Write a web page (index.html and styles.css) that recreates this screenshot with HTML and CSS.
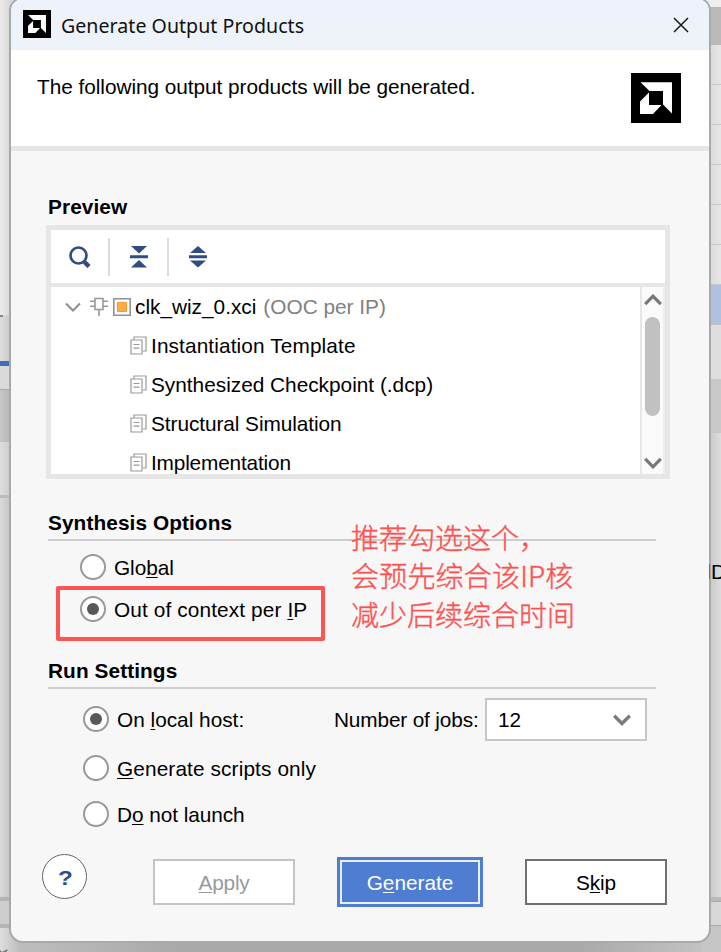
FILE: index.html
```html
<!DOCTYPE html>
<html lang="en">
<head>
<meta charset="utf-8">
<title>Generate Output Products</title>
<link rel="stylesheet" href="styles.css">
</head>
<body>
<div class="desktop">
  <div class="strip strip-left">
    <i class="l-top"></i><i class="l-dash"></i><i class="l-gap"></i><i class="l-blue"></i><i class="l-panel"></i><i class="l-dark"></i><i class="l-panel2"></i><i class="l-rule"></i><i class="l-main"></i><i class="l-foot"></i>
    <svg class="l-check" width="11" height="27" viewBox="0 0 11 27"><path d="M0 22L2 24L6.500 21.500L8 22L3 27H0" fill="#777"/></svg>
  </div>
  <main class="dialog">
    <header class="titlebar">
      <svg class="app-icon" width="28" height="28" viewBox="0 0 50 50"><path d="M0 0h50v50H0z"/><path fill="#fff" d="M9 9h32v32L32 32V18H18zM18 19.500V32h12.500L22 41H9V28z"/></svg>
      <span class="title">Generate Output Products</span>
      <svg class="close" width="16" height="16" viewBox="0 0 16 16"><path d="M1 1L15 15M15 1L1 15" stroke="#15181d" stroke-width="1.500" fill="none"/></svg>
    </header>
    <section class="banner">
      <p class="banner-text">The following output products will be generated.</p>
      <svg width="50" height="50" viewBox="0 0 50 50"><path d="M0 0h50v50H0z"/><path fill="#fff" d="M9.500 9.200H41V40.500L32 31.500V18H18.500zM18 19.500V32h12.500L22 41H9V28.500z"/></svg>
    </section>
    <div class="content">
      <h2 class="preview-title">Preview</h2>
      <section class="preview">
        <div class="toolbar">
          <svg class="tool-search" width="22" height="22" viewBox="0 0 22 22" fill="none" stroke="#2f4c85"><circle cx="9.500" cy="9.500" r="8" stroke-width="2.700"/><path d="M15.500 16L20 20.500" stroke-width="4.500"/></svg>
          <i class="sep"></i>
          <svg class="tool-icon" width="18" height="22" viewBox="0 0 18 22" fill="#2f4c85"><path d="M1 0h16L9 7.500zM0 9.300h18v3H0zM1 21.500h16L9 14z"/></svg>
          <i class="sep"></i>
          <svg class="tool-icon" width="18" height="22" viewBox="0 0 18 22" fill="#2f4c85"><path d="M1 7L9 0l8 7zM0 9.300h18v3H0zM1 14.500h16L9 21.500z"/></svg>
        </div>
        <div class="tree-wrap">
          <div class="tree">
            <div class="row root">
              <svg width="16" height="10" viewBox="0 0 16 10"><path d="M1 1.500L8 8.500L15 1.500" fill="none" stroke="#8e8e8e" stroke-width="2"/></svg>
              <svg class="chip" width="18" height="19" viewBox="0 0 18 19" fill="none" stroke="#999" stroke-width="1.600"><path d="M5 1.500h8v11H5zM0 4.300h5M0 9.300h5M13 4.300h5M13 9.300h5M9 12.500V19"/></svg>
              <svg class="source" width="18" height="18" viewBox="0 0 18 18"><path d="M.8.800h16.400v16.400H.8z" fill="#fff" stroke="#929294" stroke-width="1.600"/><path d="M4.500 4.500h9v9h-9z" fill="#ffad42" stroke="#f79832"/></svg>
              <span class="file">clk_wiz_0.xci</span><span class="muted">(OOC per IP)</span>
            </div>
            <div class="row leaf"><svg width="17" height="19" viewBox="0 0 17 19"><path d="M4 3.500V1h12v14h-3M1 4h11v14H1zM3.500 8.500h6M3.500 12.200h6" fill="none" stroke="#999" stroke-width="1.200"/></svg><span class="wide">Instantiation Template</span></div>
            <div class="row leaf"><svg width="17" height="19" viewBox="0 0 17 19"><path d="M4 3.500V1h12v14h-3M1 4h11v14H1zM3.500 8.500h6M3.500 12.200h6" fill="none" stroke="#999" stroke-width="1.200"/></svg><span>Synthesized Checkpoint (.dcp)</span></div>
            <div class="row leaf"><svg width="17" height="19" viewBox="0 0 17 19"><path d="M4 3.500V1h12v14h-3M1 4h11v14H1zM3.500 8.500h6M3.500 12.200h6" fill="none" stroke="#999" stroke-width="1.200"/></svg><span class="snug">Structural Simulation</span></div>
            <div class="row leaf"><svg width="17" height="19" viewBox="0 0 17 19"><path d="M4 3.500V1h12v14h-3M1 4h11v14H1zM3.500 8.500h6M3.500 12.200h6" fill="none" stroke="#999" stroke-width="1.200"/></svg><span class="tight">Implementation</span></div>
          </div>
          <div class="scrollbar">
            <svg width="18" height="12" viewBox="0 0 18 12"><path d="M1.200 10.200L9 2.200L16.800 10.200" fill="none" stroke="#777" stroke-width="3.200"/></svg>
            <i class="thumb"></i>
            <svg class="down" width="18" height="12" viewBox="0 0 18 12"><path d="M1.200 1.800L9 9.800L16.800 1.800" fill="none" stroke="#777" stroke-width="3.200"/></svg>
          </div>
        </div>
      </section>

      <h2 class="group-title">Synthesis Options</h2>
      <div class="synth">
        <label class="option global"><i class="radio"></i><span class="snug">Glo<u>b</u>al</span></label>
        <label class="option"><i class="radio on"></i><span class="wide">Out of context per <u>I</u>P</span></label>
      </div>

      <h2 class="group-title run-title">Run Settings</h2>
      <div class="run">
        <div class="local">
          <label class="option"><i class="radio on"></i><span>On <u>l</u>ocal host:</span></label>
          <span class="jobs">Number of jobs:</span>
          <div class="select"><span>12</span><svg width="18" height="12" viewBox="0 0 18 12"><path d="M1.200 1.800L9 9.500L16.800 1.800" fill="none" stroke="#7b7b7b" stroke-width="3.400"/></svg></div>
        </div>
        <label class="option scripts"><i class="radio"></i><span class="wide"><u>G</u>enerate scripts only</span></label>
        <label class="option launch"><i class="radio"></i><span class="snug">D<u>o</u> not launch</span></label>
      </div>

      <footer class="actions">
        <div class="help"><span>?</span></div>
        <div class="button apply"><span><u>A</u>pply</span></div>
        <div class="button generate"><span>G<u>e</u>nerate</span></div>
        <div class="button skip"><span>S<u>k</u>ip</span></div>
      </footer>
    </div>
  </main>
  <div class="strip strip-right">
    <i class="r-top"></i><i class="r-bar"></i><i class="r-row"></i><i class="r-row"></i><i class="r-row"></i><i class="r-row"></i><i class="r-row"></i><i class="r-row"></i><i class="r-sel"></i><i class="r-gap"></i><i class="r-dark"></i><div class="r-main"><span class="letter">D</span></div><i class="r-line"></i><i class="r-foot"></i>
  </div>
  <div class="edge-letter"></div>
  <div class="highlight"></div>
  <div class="note"><div>推荐勾选这个，</div><div class="note-mid">会预先综合该IP核</div><div>减少后续综合时间</div></div>
</div>
</body>
</html>
```
FILE: styles.css
```css
* { box-sizing: border-box; }
body { margin: 0; }
.desktop {
  position: relative;
  display: flex;
  width: 721px;
  height: 952px;
  overflow: hidden;
  background: linear-gradient(90deg, #c0c0c0, #a9a9a9 25%, #a9a9a9 80%, #c6c6c6);
  font-family: "Liberation Sans", Arial, sans-serif;
  font-size: 20.8px;
  color: #000;
}
i { display: block; flex: none; font-style: normal; }
svg { display: block; flex: none; }
p, h2 { margin: 0; }
u { text-decoration-thickness: 1px; text-underline-offset: 2px; text-decoration-skip-ink: none; }

.strip { display: flex; flex-direction: column; flex: none; height: 952px; }
.strip-left { width: 18px; margin-right: -9px; background: linear-gradient(90deg, #dedede, #c0c0c0); }
.l-top { height: 315px; background: linear-gradient(90deg, #ececec, #dadada 9px); }
.l-dash { width: 3px; height: 2px; background: #888; }
.l-gap { height: 44px; background: linear-gradient(90deg, #dedede, #cbcbcb 9px); }
.l-blue { height: 5px; background: #426cb8; }
.l-panel { height: 23px; background: #dadada; }
.l-dark { height: 53px; background: linear-gradient(90deg, #c8c8c8, #b8b8b8 9px); border-top: 1px solid #aaa; }
.l-panel2 { height: 53px; background: linear-gradient(90deg, #dedede, #cfcfcf 9px); }
.l-rule { height: 3px; background: #bcbcbc; }
.l-main { height: 399px; background: linear-gradient(90deg, #dadada, #c8c8c8 9px); }
.l-foot { height: 31px; background: #cecece; border: solid #b4b4b4; border-width: 4px 0; }

.strip-right { z-index: 0; width: 20px; margin-left: -10px; background: #c6c6c6; }
.r-top { height: 7px; background: #eee; }
.r-bar { height: 38px; background: #b9b9b9; }
.r-row { height: 40px; background: linear-gradient(90deg, #dcdcdc 10px, #e6e6e6); border-bottom: 1px solid #c6c6c6; }
.r-sel { height: 40px; background: #b0c1df; border-bottom: 1px solid #c0c0c0; }
.r-gap { height: 54px; background: #dedede; }
.r-dark { height: 54px; background: #c8c8c8; }
.r-main { height: 464px; padding: 127px 0 0 10px; background: linear-gradient(90deg, #cbcbcb 10px, #dcdcdc); overflow: hidden; }
.letter { display: block; line-height: 24px; }
.r-line { height: 4px; background: #bababa; }
.r-foot { height: 25px; background: #d8d8d8; border: solid #aaa; border-width: 1px 0; }
.edge-letter { position: absolute; z-index: 2; left: 709px; top: 564px; width: 1px; height: 15px; background: #55789f; }

.dialog {
  position: relative;
  z-index: 1;
  flex: none;
  width: 702px;
  height: 946px;
  margin-top: -3px;
  border: 2px solid #a9a9a9;
  border-radius: 14px;
  background: #f7f7f7;
  overflow: hidden;
}
.titlebar {
  display: flex;
  align-items: center;
  height: 51px;
  padding: 0 20px 2px 12px;
  background: linear-gradient(180deg, #eef2fb, #edf3f8);
}
.title { flex: 1; margin: 4px 0 0 10px; font-family: "Noto Sans", "Open Sans", sans-serif; font-size: 19.6px; letter-spacing: .02px; white-space: nowrap; color: #111; }
.close { margin-top: 2px; }
.banner { display: flex; align-items: flex-start; justify-content: space-between; height: 101px; padding: 23px 28px 0 26px; background: #fff; border-bottom: 5px solid #e6e6e6; }
.banner-text { margin-top: 2px; line-height: 24px; letter-spacing: -.04px; }

.content { padding: 44px 39px 0 35px; }
h2 { font-size: 20.8px; line-height: 24px; font-weight: 700; letter-spacing: .09px; }
.preview-title { margin-left: 2px; }
.preview { width: 624px; height: 254px; margin-top: 6px; border: 5px solid #e6e6e6; background: #fff; }
.toolbar { display: flex; align-items: center; height: 57px; padding-left: 18px; border-bottom: 4px solid #e6e6e6; }
.sep { width: 2px; height: 38px; background: #dadada; }
.tool-search { margin-right: 17px; }
.tool-icon { margin: 0 19.500px; }
.tree-wrap { display: flex; height: 187px; }
.tree { flex: 1; overflow: hidden; }
.row { display: flex; align-items: center; height: 39px; white-space: nowrap; }
.root { padding-left: 14px; }
.chip { margin-left: 9px; }
.source { margin-left: 5px; }
.file { margin-left: 4px; }
.muted { margin-left: 7px; color: #808080; }
.leaf { padding-left: 79px; }
.leaf svg { margin-right: 4px; }
.leaf span, .file, .muted { line-height: 24px; }
.wide { letter-spacing: .12px; }
.snug { letter-spacing: -.06px; }
.tight { letter-spacing: -.17px; }
.scrollbar { display: flex; flex-direction: column; align-items: flex-start; width: 25px; padding: 7px 0 5px 2px; border-left: 2px solid #e6e6e6; border-right: 2px solid #eee; background: #fafafa; }
.thumb { width: 15px; height: 99px; margin: 11px 0 0 1px; border-radius: 8px; background: #c1c1c1; }
.scrollbar .down { margin-top: auto; }

.group-title { width: 608px; height: 30px; margin: 32px 0 0 2px; border-bottom: 2px solid #cdcdcd; }
.synth { padding: 13px 0 0 34px; }
.option { display: flex; align-items: center; height: 26px; gap: 8px; line-height: 24px; white-space: nowrap; }
.radio { display: flex; align-items: center; justify-content: center; width: 26px; height: 26px; border: 2px solid #999; border-radius: 50%; background: #fff; }
.on::before { content: ""; width: 12px; height: 12px; border-radius: 50%; background: #555958; }
.option span { margin-top: 2px; }
.global { margin-bottom: 16px; }
.run-title { margin-top: 37px; }
.run { padding: 9px 0 0 37px; }
.local { display: flex; align-items: center; height: 43px; }
.local .option { width: 251px; margin-top: -1px; }
.jobs { width: 151px; letter-spacing: -.15px; white-space: nowrap; }
.select { display: flex; align-items: center; justify-content: space-between; width: 162px; height: 43px; padding: 0 14px 0 11px; border: 2px solid #c6c6c6; background: #fff; }
.scripts { margin-top: 14px; }
.launch { margin-top: 20px; }

.actions { display: flex; align-items: flex-start; height: 50px; margin: 30px 0 0 -4px; }
.help { width: 45px; height: 45px; margin-top: -3px; border: 1.500px solid #666; border-radius: 50%; background: #fff; color: #2f4c85; font: bold 21px/45px "Liberation Sans", Arial, sans-serif; text-align: center; }
.help span { display: block; margin-left: 2px; transform: scaleX(1.15); }
.button { display: flex; align-items: center; justify-content: center; width: 142px; height: 46px; background: #fff; border: 2px solid #c4c4c4; margin-top: 2px; padding-top: 2px; }
.apply { margin-left: 66px; color: #999; letter-spacing: -.2px; }
.generate { width: 146px; height: 50px; margin: 0 42px; border: 0; outline: 2px solid #e9effa; outline-offset: -5px; background: #4f7dd1; color: #fff; }
.skip { border-color: #707070; letter-spacing: -.1px; }

.highlight { position: absolute; z-index: 2; left: 56px; top: 586px; width: 269px; height: 55px; border: 4px solid #ff5454; border-radius: 2px; }
.note { position: absolute; z-index: 2; left: 351px; top: 518px; font-family: "Noto Sans CJK SC", sans-serif; font-size: 28px; font-weight: 300; line-height: 38.500px; color: #ff5050; -webkit-text-stroke: .4px #ff5050; white-space: nowrap; }
.note-mid { letter-spacing: .2px; transform: translateY(-1px); }
```
